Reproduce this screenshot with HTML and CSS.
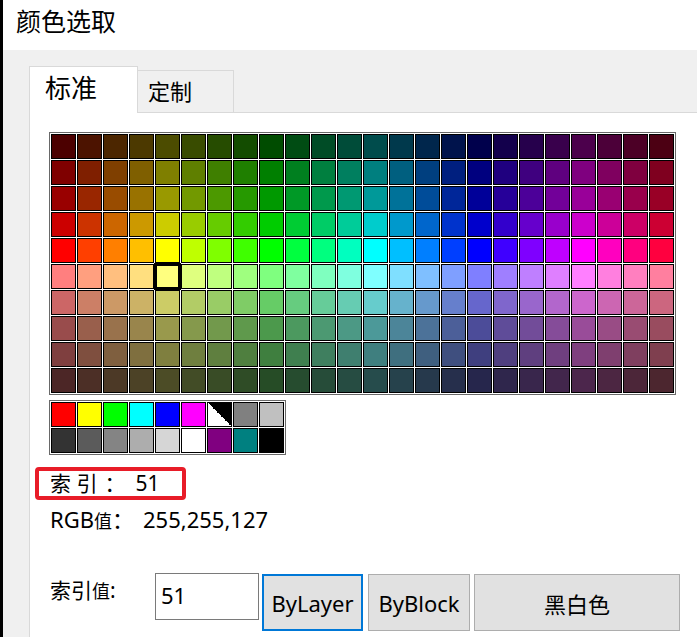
FILE: index.html
```html
<!DOCTYPE html>
<html lang="zh-CN">
<head>
  <meta charset="UTF-8" />
  <meta name="viewport" content="width=device-width, initial-scale=1.0"/>
  <title>颜色选取</title>
  <link rel="stylesheet" href="styles.css">
</head>
<body>
  <div class="window">
    <div class="titlebar">颜色选取</div>
    <div class="content">
      <div class="tabs">
        <div class="tab active">标准</div>
        <div class="tab">定制</div>
      </div>
      <div class="panel">
        <div class="palette" id="palette"></div>
        <div class="palette std" id="stdColors"></div>
        <div class="index-line">索 引<span class="colon">：</span><span id="indexValue">51</span></div>
        <div class="rgb-line">RGB<span class="small">值</span>：<span id="rgbValue" class="rgb-value">255,255,127</span></div>
        <div class="controls">
          <label class="ctl-label" for="indexInput">索引<span class="small">值</span>:</label>
          <input id="indexInput" class="index-input" type="text" value="51">
          <button class="btn focused">ByLayer</button>
          <button class="btn">ByBlock</button>
          <button class="btn wide">黑白色</button>
        </div>
      </div>
    </div>
  </div>

  <script>
    const palette = document.getElementById('palette');
    const stdBox = document.getElementById('stdColors');
    const indexValue = document.getElementById('indexValue');
    const rgbValue = document.getElementById('rgbValue');
    const indexInput = document.getElementById('indexInput');

    // rows top to bottom: saturation, brightness, offset in the aci number
    const rows = [
      [1, 0.3, 8], [1, 0.5, 6], [1, 0.6, 4], [1, 0.8, 2], [1, 1, 0],
      [0.5, 1, 1], [0.5, 0.8, 3], [0.5, 0.6, 5], [0.5, 0.5, 7], [0.5, 0.3, 9]
    ];

    function hsv(h, s, v) {
      const f = n => {
        const k = (n + h / 60) % 6;
        return Math.floor(255 * v * (1 - s * Math.max(0, Math.min(k, 4 - k, 1))) + 1e-6);
      };
      return [f(5), f(3), f(1)];
    }

    const cells = {};
    let current = null;

    function select(cell) {
      if (current) current.classList.remove('sel');
      current = cell;
      cell.classList.add('sel');
      indexValue.textContent = cell.dataset.index;
      rgbValue.textContent = cell.dataset.rgb;
      indexInput.value = cell.dataset.index;
    }

    function addCell(box, index, rgb, extra) {
      const cell = document.createElement('div');
      cell.className = 'cell' + (extra ? ' ' + extra : '');
      cell.dataset.index = index;
      cell.dataset.rgb = rgb.join(',');
      if (!extra) cell.style.background = 'rgb(' + rgb.join(',') + ')';
      cell.addEventListener('click', () => select(cell));
      box.appendChild(cell);
      if (index !== '') cells[index] = cell;
    }

    rows.forEach(([s, v, off]) => {
      for (let c = 0; c < 24; c++) {
        addCell(palette, 10 + c * 10 + off, hsv(c * 15, s, v));
      }
    });

    const std = [
      [1, [255, 0, 0]], [2, [255, 255, 0]], [3, [0, 255, 0]], [4, [0, 255, 255]],
      [5, [0, 0, 255]], [6, [255, 0, 255]], [7, [255, 255, 255], 'bw'],
      [8, [128, 128, 128]], [9, [192, 192, 192]],
      [250, [51, 51, 51]], [251, [91, 91, 91]], [252, [132, 132, 132]],
      [253, [173, 173, 173]], [254, [214, 214, 214]], [255, [255, 255, 255]],
      ['', [128, 0, 128]], ['', [0, 128, 128]], ['', [0, 0, 0]]
    ];
    std.forEach(([i, rgb, extra]) => addCell(stdBox, i, rgb, extra));

    indexInput.addEventListener('change', () => {
      const cell = cells[parseInt(indexInput.value, 10)];
      if (cell) select(cell);
    });

    select(cells[51]);
  </script>
</body>
</html>
```

FILE: styles.css
```css
body {
  margin: 0;
  font-family: "Noto Sans", "Noto Sans CJK SC", sans-serif;
  color: #000;
  background-color: #f0f0f0;
  overflow: hidden;
}
.window {
  border-left: 3px solid #000;
  height: 637px;
  overflow: hidden;
}
.titlebar {
  background-color: #fff;
  height: 50px;
  padding-left: 13px;
  font-size: 25px;
  line-height: 42px;
}
.content {
  padding: 16px 0 0 26px;
}
.tabs {
  display: flex;
  align-items: flex-end;
  height: 46px;
}
.tab {
  box-sizing: border-box;
  width: 96px;
  height: 42px;
  padding-left: 10px;
  border-top: 1px solid #d9d9d9;
  border-right: 1px solid #d9d9d9;
  background-color: #f0f0f0;
  font-size: 22px;
  line-height: 40px;
}
.tab.active {
  position: relative;
  z-index: 1;
  width: 109px;
  height: 47px;
  margin-bottom: -1px;
  padding-left: 15px;
  border-left: 1px solid #d9d9d9;
  background-color: #fff;
  font-size: 26px;
  line-height: 42px;
}
.panel {
  background-color: #fff;
  border-top: 1px solid #d9d9d9;
  border-left: 1px solid #d9d9d9;
  padding: 19px 0 0 19px;
  height: 505px;
}
.palette {
  display: grid;
  grid-template-columns: repeat(24, 25px);
  grid-auto-rows: 25px;
  gap: 1px;
  padding: 1px;
  border: 1px solid #696969;
  width: fit-content;
  background-color: #fff;
}
.palette.std {
  grid-template-columns: repeat(9, 25px);
  margin-top: 5px;
}
.cell {
  box-sizing: border-box;
  border: 1px solid #000;
  cursor: pointer;
}
.cell.bw {
  background: linear-gradient(to bottom left, #000 50%, #fff 50%);
}
.cell.sel {
  width: 27px;
  height: 27px;
  margin: -1px;
  border-width: 3px;
}
.index-line {
  box-sizing: border-box;
  width: 151px;
  height: 33px;
  margin: 12px 0 0 -14px;
  padding-left: 11px;
  border: 4px solid #e81c28;
  border-radius: 4px;
  font-size: 21px;
  line-height: 25px;
}
.colon {
  margin: 0 10px 0 7px;
}
.rgb-line {
  margin: 4px 0 0 1px;
  font-size: 22px;
  line-height: 30px;
}
.rgb-value {
  margin-left: 9px;
}
.small {
  font-size: 18px;
}
.controls {
  display: flex;
  align-items: flex-start;
  margin-top: 37px;
}
.ctl-label {
  width: 105px;
  padding-left: 1px;
  font-size: 21px;
  line-height: 34px;
}
.index-input {
  box-sizing: border-box;
  width: 104px;
  height: 47px;
  margin: 0;
  padding: 0 0 4px 5px;
  border: 1px solid #7a7a7a;
  font-family: inherit;
  font-size: 22px;
  outline: none;
}
.btn {
  box-sizing: border-box;
  width: 102px;
  height: 57px;
  margin: 1px 0 0 5px;
  padding: 0;
  border: 1px solid #adadad;
  background-color: #e1e1e1;
  font-family: inherit;
  font-size: 22px;
  color: #000;
}
.btn.focused {
  width: 101px;
  margin-left: 3px;
  border: 2px solid #0078d7;
}
.btn.wide {
  width: 206px;
  margin-left: 4px;
}
```
